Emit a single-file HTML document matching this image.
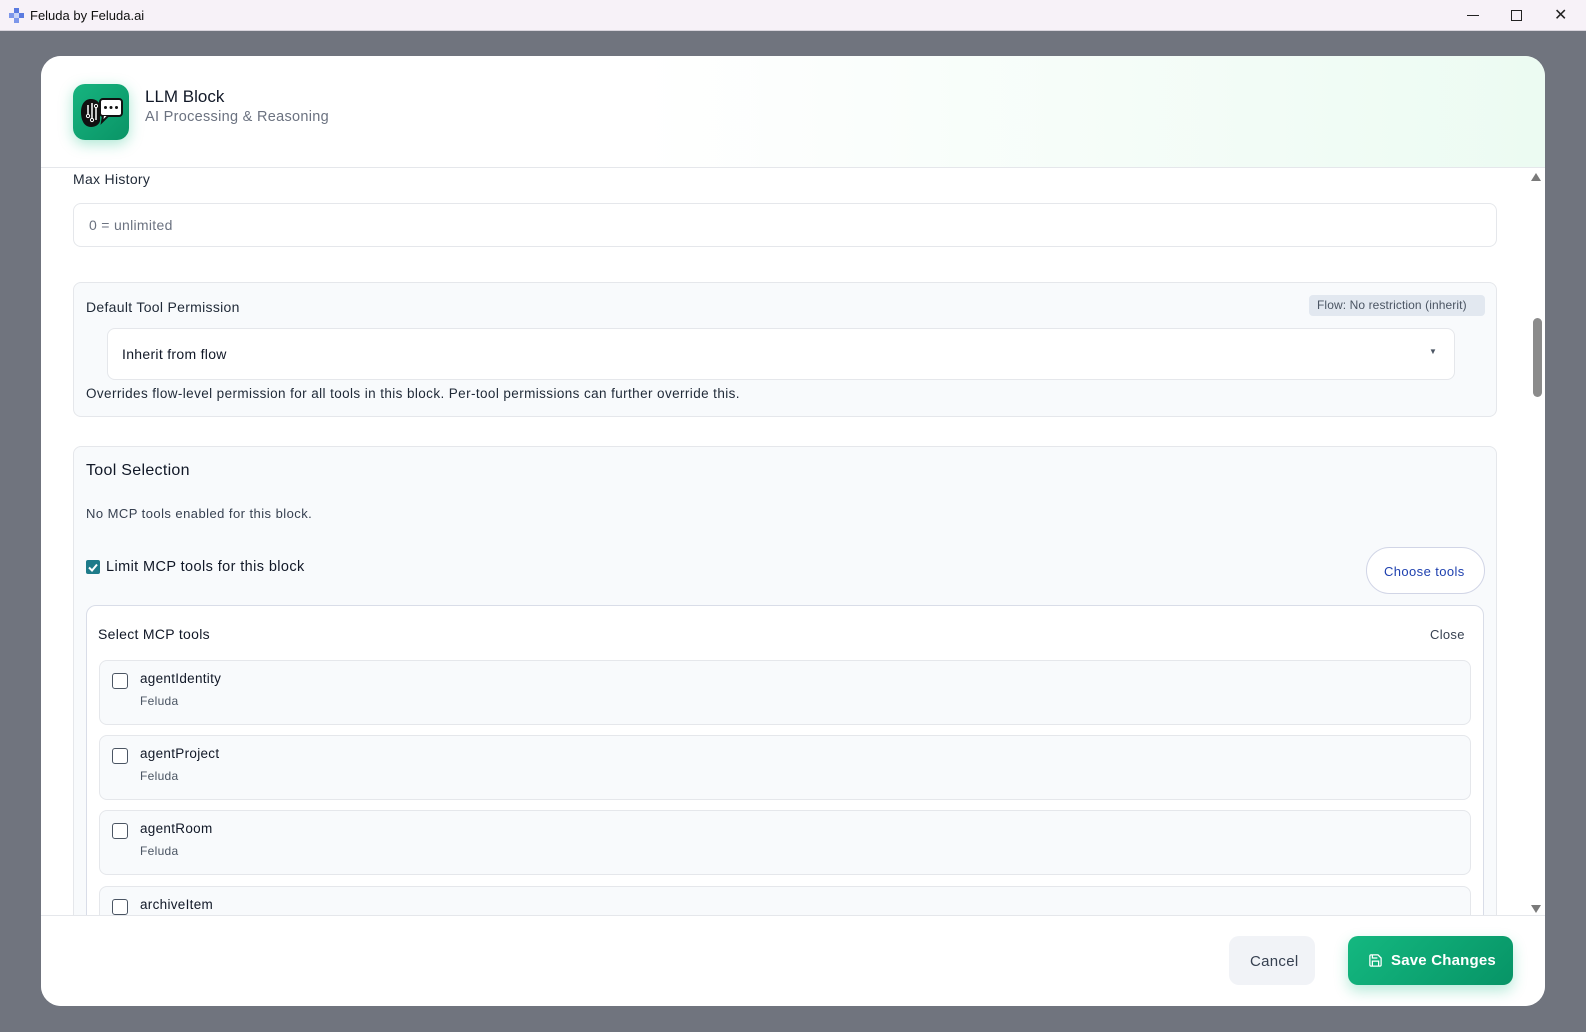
<!DOCTYPE html>
<html><head><meta charset="utf-8"><style>
*{box-sizing:border-box;margin:0;padding:0}
body{width:1586px;height:1032px;overflow:hidden;font-family:"Liberation Sans",sans-serif;background:#70747e;position:relative;color:#1f2937;letter-spacing:.3px}
.a{position:absolute}
.tb{left:0;top:0;width:1586px;height:31px;background:#f7f2f8;border-bottom:1px solid #d8d4dc;letter-spacing:0}
.modal{left:41px;top:56px;width:1504px;height:950px;background:#fff;border-radius:20px;overflow:hidden}
.t{position:absolute;white-space:nowrap}
.cb{position:absolute;width:16px;height:16px;border:1.5px solid #4b5563;border-radius:3px;background:#fff}
.item{position:absolute;left:58px;width:1372px;height:65px;background:#f8fafc;border:1px solid #e5e7eb;border-radius:8px}
</style></head><body>
<div class="a tb">
 <svg class="a" style="left:9px;top:8px" width="15" height="15" viewBox="0 0 15 15"><rect x="5" y="0" width="5" height="5" fill="#5b7be0"/><rect x="0" y="5" width="5" height="5" fill="#7d97ea"/><rect x="10" y="5" width="5" height="5" fill="#5b7be0"/><rect x="5" y="10" width="5" height="5" fill="#7d97ea"/><rect x="5" y="5" width="5" height="5" fill="#c9d4f6"/></svg>
 <div class="t" style="left:30px;top:8px;font-size:13px;color:#111">Feluda by Feluda.ai</div>
 <div class="a" style="left:1467px;top:15px;width:12px;height:1px;background:#222"></div>
 <div class="a" style="left:1511px;top:10px;width:11px;height:11px;border:1.3px solid #222"></div>
 <div class="t" style="left:1554px;top:5px;font-size:16px;color:#222">&#10005;</div>
</div>
<div class="a modal">
 <div class="a" style="left:0;top:0;width:1504px;height:112px;background:linear-gradient(90deg,#fff 0%,#fff 40%,#ecfbf2 100%);border-bottom:1px solid #e5e7eb"></div>
 <div class="a" style="left:32px;top:28px;width:56px;height:56px;border-radius:12px;background:linear-gradient(135deg,#16b47f,#0a9466);box-shadow:0 4px 14px rgba(16,185,129,.35)">
  <svg width="56" height="56" viewBox="0 0 56 56"><path d="M8 28c0-8 4-13 10-13 5 0 8 3 9 6v16c-1 4-5 6-9 6-7 0-10-7-10-15z" fill="#111"/><path d="M15 21v9m4-11v16m4-12v13" stroke="#fff" stroke-width="1.5" fill="none"/><circle cx="15" cy="32" r="1.6" fill="none" stroke="#fff"/><circle cx="19" cy="36" r="1.6" fill="none" stroke="#fff"/><circle cx="23" cy="22" r="1.6" fill="none" stroke="#fff"/><rect x="27" y="15" width="22" height="17" rx="3" fill="#fff" stroke="#111" stroke-width="2"/><path d="M30 32l-1 6 6-6" fill="#fff" stroke="#111" stroke-width="2"/><circle cx="32.5" cy="23.5" r="1.5" fill="#111"/><circle cx="38" cy="23.5" r="1.5" fill="#111"/><circle cx="43.5" cy="23.5" r="1.5" fill="#111"/></svg>
 </div>
 <div class="t" style="left:104px;top:31px;font-size:17px;color:#111827;letter-spacing:0">LLM Block</div>
 <div class="t" style="left:104px;top:53px;font-size:14.5px;color:#6b7280">AI Processing &amp; Reasoning</div>

 <div class="t" style="left:32px;top:115px;font-size:14px;color:#1f2937">Max History</div>
 <div class="a" style="left:32px;top:147px;width:1424px;height:44px;border:1.5px solid #e5e7eb;border-radius:8px"></div>
 <div class="t" style="left:48px;top:161px;font-size:14px;color:#6b7280">0 = unlimited</div>

 <div class="a" style="left:32px;top:226px;width:1424px;height:135px;background:#f8fafc;border:1px solid #e5e7eb;border-radius:8px"></div>
 <div class="t" style="left:45px;top:243px;font-size:14px;color:#1f2937">Default Tool Permission</div>
 <div class="a" style="left:1268px;top:239px;width:176px;height:21px;background:#e2e8f0;border-radius:4px"></div>
 <div class="t" style="left:1276px;top:242px;font-size:12px;color:#4b5563;letter-spacing:.1px">Flow: No restriction (inherit)</div>
 <div class="a" style="left:66px;top:272px;width:1348px;height:52px;background:#fff;border:1.5px solid #e5e7eb;border-radius:8px"></div>
 <div class="t" style="left:81px;top:290px;font-size:14px;color:#111827">Inherit from flow</div>
 <div class="t" style="left:1388px;top:291px;font-size:8px;color:#4b5563">&#9660;</div>
 <div class="t" style="left:45px;top:330px;font-size:13.5px;color:#1f2937;letter-spacing:.4px">Overrides flow-level permission for all tools in this block. Per-tool permissions can further override this.</div>

 <div class="a" style="left:32px;top:390px;width:1424px;height:600px;background:#f8fafc;border:1px solid #e5e7eb;border-radius:8px"></div>
 <div class="t" style="left:45px;top:406px;font-size:16px;color:#111827">Tool Selection</div>
 <div class="t" style="left:45px;top:450px;font-size:13px;color:#374151;letter-spacing:.45px">No MCP tools enabled for this block.</div>
 <div class="a" style="left:45px;top:504px;width:14px;height:14px;background:#1e7b8a;border-radius:2px"><svg width="14" height="14"><path d="M3 7.5l3 3 5-6" stroke="#fff" stroke-width="2" fill="none"/></svg></div>
 <div class="t" style="left:65px;top:503px;font-size:14.5px;color:#111827;letter-spacing:.4px">Limit MCP tools for this block</div>
 <div class="a" style="left:1325px;top:491px;width:119px;height:47px;background:#fff;border:1px solid #d1d5e6;border-radius:24px"></div>
 <div class="t" style="left:1343px;top:508px;font-size:13px;color:#1e40af;letter-spacing:.4px">Choose tools</div>

 <div class="a" style="left:45px;top:549px;width:1398px;height:420px;background:#fff;border:1px solid #d9dde8;border-radius:10px">
  <div class="t" style="left:11px;top:20px;font-size:14px;color:#111827">Select MCP tools</div>
  <div class="t" style="left:1343px;top:21px;font-size:13px;color:#374151">Close</div>
  <div class="item" style="left:12px;top:54px"><div class="cb" style="left:12px;top:12px"></div><div class="t" style="left:40px;top:10px;font-size:13.5px;color:#111827">agentIdentity</div><div class="t" style="left:40px;top:33px;font-size:12px;color:#4b5563">Feluda</div></div>
  <div class="item" style="left:12px;top:129px"><div class="cb" style="left:12px;top:12px"></div><div class="t" style="left:40px;top:10px;font-size:13.5px;color:#111827">agentProject</div><div class="t" style="left:40px;top:33px;font-size:12px;color:#4b5563">Feluda</div></div>
  <div class="item" style="left:12px;top:204px"><div class="cb" style="left:12px;top:12px"></div><div class="t" style="left:40px;top:10px;font-size:13.5px;color:#111827">agentRoom</div><div class="t" style="left:40px;top:33px;font-size:12px;color:#4b5563">Feluda</div></div>
  <div class="item" style="left:12px;top:280px"><div class="cb" style="left:12px;top:12px"></div><div class="t" style="left:40px;top:10px;font-size:13.5px;color:#111827">archiveItem</div></div>
 </div>

 <svg class="a" style="left:1490px;top:117px" width="10" height="8"><path d="M0 8L5 0l5 8z" fill="#7a7a7a"/></svg>
 <div class="a" style="left:1492px;top:262px;width:9px;height:79px;background:#8b8b8b;border-radius:5px"></div>
 <svg class="a" style="left:1490px;top:849px" width="10" height="8"><path d="M0 0L5 8l5-8z" fill="#7a7a7a"/></svg>

 <div class="a" style="left:0;top:859px;width:1504px;height:91px;background:#fff;border-top:1px solid #e5e7eb"></div>
 <div class="a" style="left:1188px;top:880px;width:86px;height:49px;background:#f1f3f7;border-radius:10px"></div>
 <div class="t" style="left:1209px;top:897px;font-size:15px;color:#374151">Cancel</div>
 <div class="a" style="left:1307px;top:880px;width:165px;height:49px;background:linear-gradient(135deg,#14b880,#079466);border-radius:10px;box-shadow:0 6px 14px rgba(16,185,129,.3)"></div>
 <svg class="a" style="left:1327px;top:897px" width="15" height="15" viewBox="0 0 24 24" fill="none" stroke="#fff" stroke-width="2"><path d="M19 21H5a2 2 0 0 1-2-2V5a2 2 0 0 1 2-2h11l5 5v11a2 2 0 0 1-2 2z"/><path d="M17 21v-8H7v8M7 3v5h8"/></svg>
 <div class="t" style="left:1350px;top:896px;font-size:15px;font-weight:bold;color:#fff;letter-spacing:.2px">Save Changes</div>
</div>
</body></html>
